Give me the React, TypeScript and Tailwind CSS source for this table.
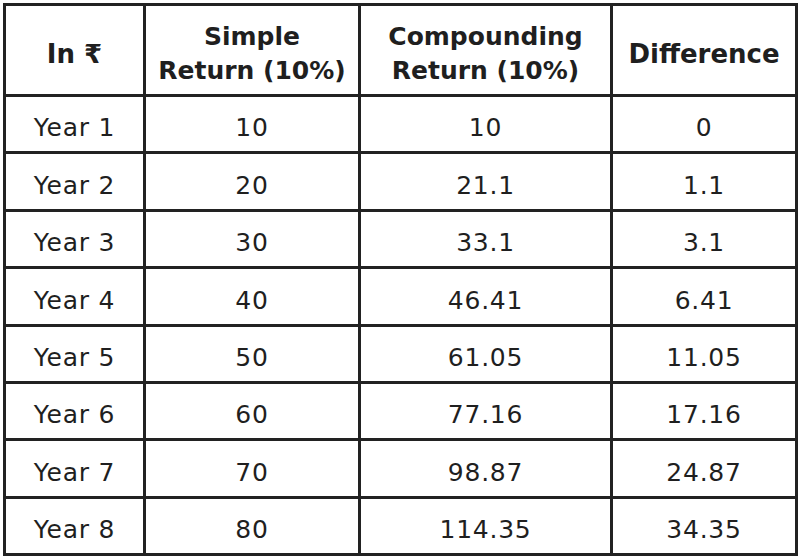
const rows: [string, string, string, string][] = [
  ['Year 1', '10', '10', '0'],
  ['Year 2', '20', '21.1', '1.1'],
  ['Year 3', '30', '33.1', '3.1'],
  ['Year 4', '40', '46.41', '6.41'],
  ['Year 5', '50', '61.05', '11.05'],
  ['Year 6', '60', '77.16', '17.16'],
  ['Year 7', '70', '98.87', '24.87'],
  ['Year 8', '80', '114.35', '34.35'],
];

export default function App() {
  return (
    <div className="w-[800px] h-[560px] bg-white pt-[3px] pl-[3px] font-['DejaVu_Sans',sans-serif] text-[#1f1f1f]">
      <div className="grid grid-cols-[137px_212px_249px_182px] grid-rows-[88px_repeat(8,1fr)] gap-[3px] p-[3px] bg-[#222] w-[795px] h-[553px]">
        {/* header */}
        <div className="bg-white flex items-center justify-center pt-[8px] text-[26px] font-bold">In ₹</div>
        <div className="bg-white flex items-center justify-center pt-[8px] text-center text-[25px] font-bold leading-[34px]">
          Simple<br />Return (10%)
        </div>
        <div className="bg-white flex items-center justify-center pt-[8px] text-center text-[25px] font-bold leading-[34px]">
          Compounding<br />Return (10%)
        </div>
        <div className="bg-white flex items-center justify-center pt-[8px] text-[26px] font-bold">Difference</div>

        {rows.map((r) =>
          r.map((c, i) => (
            <div key={r[0] + i} className="bg-white flex items-center justify-center pt-[8px] text-[25px] tracking-[0.03em]">
              {c}
            </div>
          ))
        )}
      </div>
    </div>
  );
}
